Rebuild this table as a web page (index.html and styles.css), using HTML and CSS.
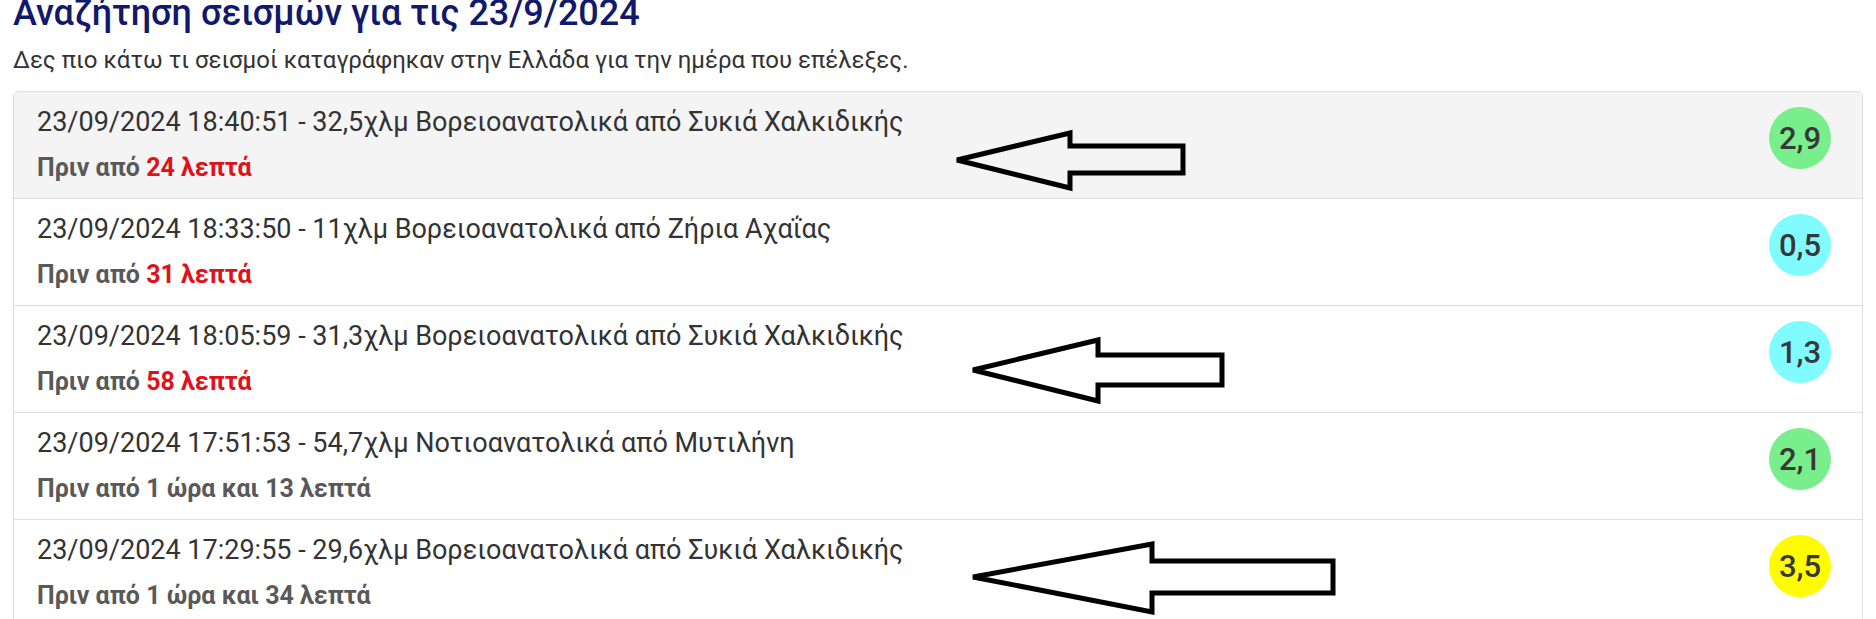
FILE: index.html
```html
<!DOCTYPE html>
<html lang="el">
<head>
<meta charset="utf-8">
<title>Αναζήτηση σεισμών</title>
<link rel="stylesheet" href="styles.css">
</head>
<body>
<main class="page">
  <h1 class="title">Αναζήτηση σεισμών για τις 23/9/2024</h1>
  <p class="lead">Δες πιο κάτω τι σεισμοί καταγράφηκαν στην Ελλάδα για την ημέρα που επέλεξες.</p>
  <ul class="quakes">
    <li class="quake quake--active">
      <div class="quake__info">
        <div class="quake__desc">23/09/2024 18:40:51 - 32,5χλμ Βορειοανατολικά από Συκιά Χαλκιδικής</div>
        <div class="quake__ago">Πριν από <span class="recent">24 λεπτά</span></div>
      </div>
      <span class="mag mag--green">2,9</span>
    </li>
    <li class="quake">
      <div class="quake__info">
        <div class="quake__desc">23/09/2024 18:33:50 - 11χλμ Βορειοανατολικά από Ζήρια Αχαΐας</div>
        <div class="quake__ago">Πριν από <span class="recent">31 λεπτά</span></div>
      </div>
      <span class="mag mag--cyan">0,5</span>
    </li>
    <li class="quake">
      <div class="quake__info">
        <div class="quake__desc">23/09/2024 18:05:59 - 31,3χλμ Βορειοανατολικά από Συκιά Χαλκιδικής</div>
        <div class="quake__ago">Πριν από <span class="recent">58 λεπτά</span></div>
      </div>
      <span class="mag mag--cyan">1,3</span>
    </li>
    <li class="quake">
      <div class="quake__info">
        <div class="quake__desc">23/09/2024 17:51:53 - 54,7χλμ Νοτιοανατολικά από Μυτιλήνη</div>
        <div class="quake__ago">Πριν από 1 ώρα και 13 λεπτά</div>
      </div>
      <span class="mag mag--green">2,1</span>
    </li>
    <li class="quake">
      <div class="quake__info">
        <div class="quake__desc">23/09/2024 17:29:55 - 29,6χλμ Βορειοανατολικά από Συκιά Χαλκιδικής</div>
        <div class="quake__ago">Πριν από 1 ώρα και 34 λεπτά</div>
      </div>
      <span class="mag mag--yellow">3,5</span>
    </li>
  </ul>
  <svg class="annotations" width="1876" height="619" viewBox="0 0 1876 619" aria-hidden="true">
    <polygon points="957,160 1070,133 1070,146 1183,146 1183,173 1070,173 1070,188" />
    <polygon points="973,370 1098,340 1098,355 1222,355 1222,385 1098,385 1098,401" />
    <polygon points="973,577 1152,544 1152,561 1333,561 1333,593 1152,593 1152,612" />
  </svg>
</main>
</body>
</html>
```
FILE: styles.css
```css
html, body {
  margin: 0;
  padding: 0;
  background: #ffffff;
}

.page {
  position: relative;
  padding: 0 13px;
  font-family: Roboto, "Noto Sans", "Liberation Sans", sans-serif;
  color: #333333;
  overflow: hidden;
  height: 619px;
  box-sizing: border-box;
}

.title {
  margin: -7px 0 0;
  font-size: 36px;
  line-height: 40px;
  font-weight: 500;
  color: #12196b;
}

.lead {
  margin: 13px 0 0;
  font-size: 24px;
  line-height: 28px;
  color: #333333;
}

.quakes {
  list-style: none;
  margin: 17px 0 0;
  padding: 0;
  border: 1px solid #dedede;
  border-radius: 5px;
  overflow: hidden;
}

.quake {
  display: flex;
  justify-content: space-between;
  align-items: flex-start;
  padding: 12px 31px 12px 23px;
  border-top: 1px solid #dedede;
  background: #ffffff;
}

.quake:first-child {
  border-top: none;
}

.quake--active {
  background: #f4f4f4;
}

.quake__info {
  display: flex;
  flex-direction: column;
  gap: 10px;
}

.quake__desc {
  font-size: 27px;
  line-height: 36px;
  color: #333333;
}

.quake__ago {
  font-size: 25px;
  line-height: 36px;
  font-weight: 700;
  color: #595959;
}

.recent {
  color: #e1111a;
}

.mag {
  flex: none;
  width: 62px;
  height: 62px;
  margin-top: 3px;
  border-radius: 50%;
  display: flex;
  align-items: center;
  justify-content: center;
  font-size: 31px;
  font-weight: 500;
  color: #383838;
}

.mag--green { background: #78ee8c; }
.mag--cyan { background: #80fbff; }
.mag--yellow { background: #fffb00; }

.annotations {
  position: absolute;
  left: 0;
  top: 0;
  pointer-events: none;
}

.annotations polygon {
  fill: none;
  stroke: #000000;
  stroke-width: 5;
  stroke-linejoin: miter;
}
```
